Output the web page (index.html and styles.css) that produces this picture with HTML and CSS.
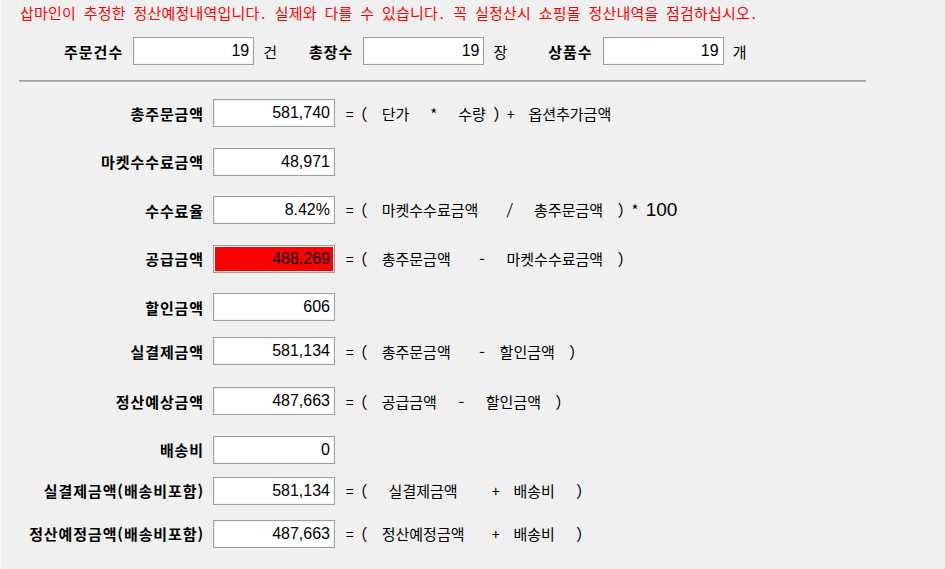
FILE: index.html
```html
<!DOCTYPE html>
<html lang="ko">
<head>
  <meta charset="UTF-8">
  <meta name="viewport" content="width=device-width, initial-scale=1.0">
  <title>정산예정내역</title>
  <link rel="stylesheet" href="styles.css">
</head>
<body>
  <p class="notice">삽마인이 추정한 정산예정내역입니다. 실제와 다를 수 있습니다. 꼭 실정산시 쇼핑몰 정산내역을 점검하십시오.</p>

  <div class="counts">
    <div class="count">
      <span class="label">주문건수</span>
      <span class="box wide">19</span>
      <span class="unit">건</span>
    </div>
    <div class="count">
      <span class="label">총장수</span>
      <span class="box wide">19</span>
      <span class="unit">장</span>
    </div>
    <div class="count last">
      <span class="label">상품수</span>
      <span class="box wide">19</span>
      <span class="unit">개</span>
    </div>
  </div>

  <div class="divider"></div>

  <div class="rows">
    <div class="row">
      <span class="label">총주문금액</span>
      <span class="box">581,740</span>
      <span class="formula">= (  단가   *   수량 ) +  옵션추가금액</span>
    </div>
    <div class="row">
      <span class="label">마켓수수료금액</span>
      <span class="box">48,971</span>
    </div>
    <div class="row">
      <span class="label">수수료율</span>
      <span class="box">8.42%</span>
      <span class="formula">= (  마켓수수료금액    /   총주문금액  ) * <span class="num">100</span></span>
    </div>
    <div class="row">
      <span class="label">공급금액</span>
      <span class="box alert">488,269</span>
      <span class="formula">= (  총주문금액    -   마켓수수료금액  )</span>
    </div>
    <div class="row">
      <span class="label">할인금액</span>
      <span class="box">606</span>
    </div>
    <div class="row tight">
      <span class="label">실결제금액</span>
      <span class="box">581,134</span>
      <span class="formula">= (  총주문금액    -  할인금액  )</span>
    </div>
    <div class="row loose">
      <span class="label">정산예상금액</span>
      <span class="box">487,663</span>
      <span class="formula">= (  공급금액   -   할인금액  )</span>
    </div>
    <div class="row">
      <span class="label">배송비</span>
      <span class="box">0</span>
    </div>
    <div class="row closer">
      <span class="label">실결제금액(배송비포함)</span>
      <span class="box">581,134</span>
      <span class="formula">= (   실결제금액     +  배송비   )</span>
    </div>
    <div class="row close">
      <span class="label">정산예정금액(배송비포함)</span>
      <span class="box">487,663</span>
      <span class="formula">= (  정산예정금액    +  배송비   )</span>
    </div>
  </div>
</body>
</html>
```

FILE: styles.css
```css
body {
  margin: 0;
  min-height: 569px;
  background-color: #f0f0f0;
  border-left: 1px solid #f8f8f8;
  font-family: "Noto Sans CJK KR", "Noto Sans", sans-serif;
  font-size: 15px;
  color: #000;
}
.notice {
  margin: 0;
  padding: 4px 0 0 19px;
  line-height: 18px;
  letter-spacing: 0.2px;
  color: #ff0000;
  font-feature-settings: "hwid";
}
.label {
  font-weight: 700;
  letter-spacing: 1px;
  white-space: nowrap;
}
.box {
  display: block;
  box-sizing: border-box;
  width: 122px;
  height: 28px;
  padding: 0 4px;
  border: 1px solid #a0a0a0;
  box-shadow: inset 0 0 0 1px #f4f4f4;
  background-color: #fff;
  font-family: "Liberation Sans", Arial, sans-serif;
  font-size: 16px;
  line-height: 26px;
  text-align: right;
}
.box.wide {
  width: 121px;
}
.box.alert {
  background-color: #ff0000;
}
.counts {
  display: flex;
  align-items: center;
  gap: 32px;
  margin-top: 15px;
  padding-left: 63px;
}
.count {
  display: flex;
  align-items: center;
  gap: 9px;
}
.count .label {
  margin-right: 1px;
}
.count.last {
  margin-left: 9px;
}
.divider {
  width: 847px;
  height: 0;
  margin: 15px 0 0 18px;
  border-top: 1px solid #a0a0a0;
  border-bottom: 1px solid #b9b9b9;
}
.rows {
  display: flex;
  flex-direction: column;
  padding-top: 17px;
}
.row {
  display: grid;
  grid-template-columns: 203px 122px auto;
  column-gap: 9px;
  align-items: center;
  margin-top: 20.5px;
}
.row:first-child {
  margin-top: 0;
}
.row.tight {
  margin-top: 16px;
}
.row.loose {
  margin-top: 22px;
}
.row.closer {
  margin-top: 13px;
}
.row.close {
  margin-top: 15px;
}
.row .label {
  text-align: right;
  letter-spacing: 0.9px;
}
.formula {
  margin-left: 2px;
  white-space: pre;
  word-spacing: -0.6px;
  font-feature-settings: "hwid";
}
.num {
  font-family: "Liberation Sans", Arial, sans-serif;
  font-size: 19px;
}
```
